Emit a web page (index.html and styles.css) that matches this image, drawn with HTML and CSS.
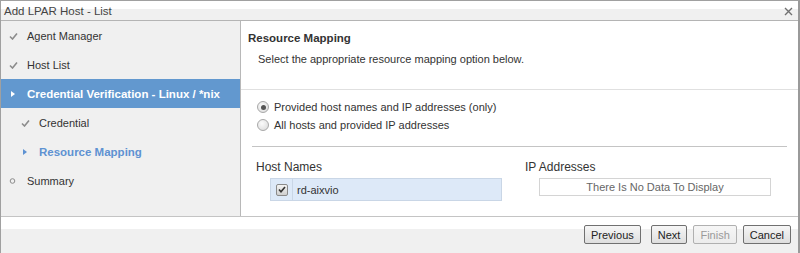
FILE: index.html
```html
<!DOCTYPE html>
<html lang="en">
<head>
    <meta charset="UTF-8">
    <title>Add LPAR Host - List</title>
    <link rel="stylesheet" href="styles.css">
</head>
<body>
    <div class="dialog">
        <div class="titlebar">
            <span class="title">Add LPAR Host - List</span>
            <svg class="close" width="9" height="9" viewBox="0 0 9 9">
                <path d="M1 1 L8 8 M8 1 L1 8" stroke="#707070" stroke-width="1.4" fill="none"/>
            </svg>
        </div>
        <div class="body">
            <nav class="steps">
                <div class="step done">
                    <svg class="ico" width="9" height="8" viewBox="0 0 9 8"><path d="M1 4.5 L3.5 7 L8 1.5" stroke="#8c8c8c" stroke-width="1.6" fill="none"/></svg>
                    Agent Manager
                </div>
                <div class="step done">
                    <svg class="ico" width="9" height="8" viewBox="0 0 9 8"><path d="M1 4.5 L3.5 7 L8 1.5" stroke="#8c8c8c" stroke-width="1.6" fill="none"/></svg>
                    Host List
                </div>
                <div class="step active">
                    <svg class="ico" width="9" height="8" viewBox="0 0 9 8"><path d="M2 1 L6 4 L2 7 Z" fill="#fff"/></svg>
                    Credential Verification - Linux / *nix
                </div>
                <div class="step sub done">
                    <svg class="ico" width="9" height="8" viewBox="0 0 9 8"><path d="M1 4.5 L3.5 7 L8 1.5" stroke="#8c8c8c" stroke-width="1.6" fill="none"/></svg>
                    Credential
                </div>
                <div class="step sub current">
                    <svg class="ico" width="9" height="8" viewBox="0 0 9 8"><path d="M2 1 L6 4 L2 7 Z" fill="#5e92d2"/></svg>
                    Resource Mapping
                </div>
                <div class="step">
                    <svg class="ico" width="9" height="8" viewBox="0 0 9 8"><circle cx="3.5" cy="4" r="2.3" stroke="#8c8c8c" stroke-width="1" fill="none"/></svg>
                    Summary
                </div>
            </nav>
            <div class="content">
                <div class="intro">
                    <h2>Resource Mapping</h2>
                    <p>Select the appropriate resource mapping option below.</p>
                </div>
                <div class="options">
                    <label class="radio"><span class="dot checked"></span>Provided host names and IP addresses (only)</label>
                    <label class="radio"><span class="dot"></span>All hosts and provided IP addresses</label>
                </div>
                <div class="lists">
                    <div class="list hosts">
                        <div class="list-title">Host Names</div>
                        <div class="row">
                            <span class="cell-check"><span class="checkbox">
                                <svg width="8" height="7" viewBox="0 0 8 7"><path d="M1 3.5 L3 5.8 L7 1" stroke="#333" stroke-width="1.6" fill="none"/></svg>
                            </span></span>
                            <span class="cell-name">rd-aixvio</span>
                        </div>
                    </div>
                    <div class="list ips">
                        <div class="list-title">IP Addresses</div>
                        <div class="empty">There Is No Data To Display</div>
                    </div>
                </div>
            </div>
        </div>
        <div class="footer">
            <button class="prev">Previous</button>
            <button>Next</button>
            <button disabled>Finish</button>
            <button>Cancel</button>
        </div>
    </div>
</body>
</html>
```

FILE: styles.css
```css
body {
    margin: 0;
    font-family: "Liberation Sans", Arial, sans-serif;
    font-size: 11px;
    color: #333;
}
.dialog {
    width: 797px;
    height: 252px;
    border-top: 1px solid #a0a0a0;
    border-left: 1px solid #a0a0a0;
    border-right: 2px solid #9a9a9a;
    border-bottom: 1px solid #9a9a9a;
    display: flex;
    flex-direction: column;
    background: #fff;
}
.titlebar {
    height: 19px;
    border-bottom: 1px solid #b4b4b4;
    background: linear-gradient(#fff 0 8px, #f0f0f0 8px);
    display: flex;
    align-items: center;
    justify-content: space-between;
    padding: 0 5px 0 3px;
    font-size: 11.5px;
}
.title {
    color: #444;
    padding-top: 1px;
}
.close {
    margin-top: 1px;
}
.body {
    height: 195px;
    display: flex;
    border-bottom: 1px solid #c4c4c4;
}
.steps {
    width: 239px;
    background: #f0f0f0;
    border-right: 1px solid #b8b8b8;
}
.step {
    height: 29px;
    display: flex;
    align-items: center;
    padding-left: 8px;
    color: #333;
}
.step .ico {
    width: 9px;
    margin-right: 9px;
}
.step.sub {
    padding-left: 20px;
}
.step.active {
    background: #6298cf;
    color: #fff;
    font-weight: bold;
    font-size: 11.5px;
}
.step.current {
    color: #5e92d2;
    font-weight: bold;
    font-size: 11.5px;
}
.content {
    flex: 1;
    display: flex;
    flex-direction: column;
}
.intro {
    height: 68px;
    border-bottom: 1px solid #e0e0e0;
    padding-left: 7px;
}
.intro h2 {
    font-size: 11.5px;
    margin: 11px 0 0;
    color: #333;
}
.intro p {
    margin: 9px 0 0 10px;
}
.options {
    margin: 0 11px 0 11px;
    padding: 8px 0 12px 5px;
    border-bottom: 1px solid #c4c4c4;
}
.radio {
    display: flex;
    align-items: center;
    height: 18px;
}
.dot {
    width: 10px;
    height: 10px;
    border: 1px solid #a8a8a8;
    border-radius: 50%;
    background: radial-gradient(circle at 40% 35%, #fbfbfb, #d8d8d8);
    margin-right: 5px;
    position: relative;
}
.dot.checked::after {
    content: "";
    position: absolute;
    left: 2.5px;
    top: 2.5px;
    width: 5px;
    height: 5px;
    border-radius: 50%;
    background: #555;
}
.lists {
    display: flex;
    padding: 13px 0 0 15px;
}
.list-title {
    font-size: 12px;
    color: #333;
    height: 18px;
}
.hosts {
    width: 269px;
}
.row {
    margin-left: 14px;
    width: 230px;
    height: 21px;
    border: 1px solid #c9d6e6;
    background: #dde9f8;
    display: flex;
    align-items: center;
}
.cell-check {
    width: 21px;
    height: 21px;
    border-right: 1px solid #c9d6e6;
    display: flex;
    align-items: center;
    justify-content: center;
}
.checkbox {
    width: 10px;
    height: 10px;
    border: 1px solid #8a8a8a;
    border-radius: 2px;
    background: linear-gradient(#f4f4f4, #cfcfcf);
    display: flex;
    align-items: center;
    justify-content: center;
}
.cell-name {
    padding-left: 4px;
}
.empty {
    margin-left: 14px;
    width: 230px;
    height: 16px;
    border: 1px solid #d4d4d4;
    color: #666;
    text-align: center;
    line-height: 16px;
}
.footer {
    flex: 1;
    background: linear-gradient(#fff 0 12px, #f0f0f0 12px);
    display: flex;
    justify-content: flex-end;
    align-items: flex-start;
    gap: 6px;
    padding: 8px 7px 0 0;
}
.footer .prev {
    margin-right: 4px;
}
button {
    font-family: "Liberation Sans", Arial, sans-serif;
    font-size: 11px;
    height: 19px;
    padding: 0 6px;
    border: 1px solid #707070;
    border-radius: 2px;
    background: linear-gradient(#f6f6f6, #dedede);
    color: #222;
    cursor: pointer;
}
button:disabled {
    border-color: #b0b0b0;
    color: #9a9a9a;
    background: linear-gradient(#f6f6f6, #ececec);
}
```
